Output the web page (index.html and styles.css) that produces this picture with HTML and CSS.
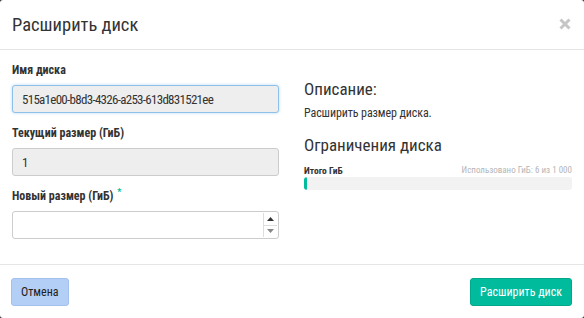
FILE: index.html
```html
<!DOCTYPE html>
<html lang="ru">
<head>
<meta charset="utf-8">
<link rel="stylesheet" href="styles.css">
</head>
<body>
<div class="modal">
  <div class="modal-header">
    <h3 class="title">Расширить диск</h3>
    <span class="close"><svg width="12" height="12" viewBox="0 0 12 12"><path d="M1.5 1.5L10.5 10.5M10.5 1.5L1.5 10.5" stroke="#c6c6c6" stroke-width="3"/></svg></span>
  </div>
  <div class="modal-body">
    <div class="left">
      <div class="group">
        <label class="label">Имя диска</label>
        <div class="input readonly focused">515a1e00-b8d3-4326-a253-613d831521ee</div>
      </div>
      <div class="group">
        <label class="label">Текущий размер (ГиБ)</label>
        <div class="input readonly">1</div>
      </div>
      <div class="group">
        <label class="label">Новый размер (ГиБ) <span class="req">*</span></label>
        <div class="input number">
          <span class="spin">
            <span class="spin-btn"><svg width="7" height="4" viewBox="0 0 7 4"><path d="M0 4L3.5 0L7 4Z" fill="#333"/></svg></span>
            <span class="spin-btn"><svg width="7" height="4" viewBox="0 0 7 4"><path d="M0 0L3.5 4L7 0Z" fill="#888"/></svg></span>
          </span>
        </div>
      </div>
    </div>
    <div class="right">
      <h4 class="heading">Описание:</h4>
      <p class="desc">Расширить размер диска.</p>
      <h4 class="heading limits">Ограничения диска</h4>
      <div class="quota-row">
        <span class="quota-title">Итого ГиБ</span>
        <span class="quota-used">Использовано ГиБ: 6 из 1 000</span>
      </div>
      <div class="progress"><div class="bar" style="width:1%"></div></div>
    </div>
  </div>
  <div class="modal-footer">
    <button class="btn cancel">Отмена</button>
    <button class="btn primary">Расширить диск</button>
  </div>
</div>
</body>
</html>
```
FILE: styles.css
```css
html, body {
  margin: 0;
  padding: 0;
  background: #333;
}
body {
  font-family: "Roboto Condensed", "Roboto", sans-serif;
  color: #333;
  font-size: 12px;
}
.modal {
  width: 584px;
  height: 318px;
  background: #fff;
  border-radius: 3px;
  display: flex;
  flex-direction: column;
  box-sizing: border-box;
}
.modal-header {
  height: 49px;
  border-bottom: 1px solid #e5e5e5;
  display: flex;
  align-items: center;
  justify-content: space-between;
  padding: 0 13px 0 12px;
  box-sizing: content-box;
}
.title {
  margin: 0;
  font-size: 18.5px;
  font-weight: normal;
  color: #333;
}
.close {
  display: flex;
  margin-top: -1px;
}
.modal-body {
  flex: 1;
  display: flex;
  gap: 25px;
  padding: 13px 12px 0 12px;
}
.left {
  width: 267px;
  display: flex;
  flex-direction: column;
  gap: 13px;
}
.group {
  display: flex;
  flex-direction: column;
  gap: 7px;
}
.label {
  font-weight: bold;
  font-size: 12px;
  color: #333;
  line-height: 15px;
}
.req {
  color: #00bc9c;
  font-size: 9px;
  line-height: 0;
  vertical-align: 5px;
  margin-left: 1px;
}
.input {
  height: 28px;
  box-sizing: border-box;
  border: 1px solid #ccc;
  border-radius: 3px;
  padding: 0 9px;
  display: flex;
  align-items: center;
  font-size: 13px;
  letter-spacing: -0.72px;
  color: #333;
}
.readonly {
  background: #eee;
}
.focused {
  border-color: #8ec1ea;
  box-shadow: 0 0 3px rgba(102, 175, 233, 0.5);
}
.number {
  background: #fff;
  justify-content: flex-end;
  padding: 1px;
}
.spin {
  display: flex;
  flex-direction: column;
  width: 13px;
  height: 100%;
  border-left: 1px solid #ddd;
}
.spin-btn {
  flex: 1;
  display: flex;
  align-items: center;
  justify-content: center;
}
.spin-btn + .spin-btn {
  border-top: 1px solid #ddd;
}
.right {
  flex: 1;
  padding-top: 17px;
}
.heading {
  margin: 0;
  font-size: 17px;
  font-weight: normal;
  color: #333;
  line-height: 18px;
}
.desc {
  margin: 8px 0 0 0;
  font-size: 12px;
  letter-spacing: -0.1px;
  line-height: 15px;
}
.limits {
  margin-top: 15px;
}
.quota-row {
  display: flex;
  justify-content: space-between;
  align-items: flex-end;
  margin-top: 11px;
  font-size: 9px;
  line-height: 11px;
}
.quota-title {
  font-weight: bold;
  font-size: 9.5px;
  color: #333;
}
.quota-used {
  color: #b5b5b5;
}
.progress {
  margin-top: 1px;
  height: 13px;
  background: #f2f2f2;
  border-radius: 3px;
  overflow: hidden;
}
.bar {
  height: 100%;
  background: #00bc9c;
  min-width: 3px;
  border-radius: 3px;
}
.modal-footer {
  height: 53px;
  border-top: 1px solid #e5e5e5;
  display: flex;
  align-items: center;
  justify-content: space-between;
  padding: 0 12px 0 11px;
}
.btn {
  font-family: inherit;
  font-size: 12px;
  height: 28px;
  border-radius: 3px;
  padding: 0 9px;
  cursor: pointer;
}
.cancel {
  background: #b3cff5;
  border: 1px solid #a3c1ee;
  color: #222;
}
.primary {
  background: #00bc9c;
  border: 1px solid #00a98c;
  color: #fff;
}
```
